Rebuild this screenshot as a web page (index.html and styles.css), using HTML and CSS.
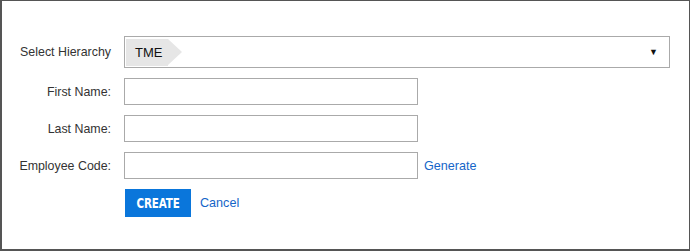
FILE: index.html
```html
<!DOCTYPE html>
<html>
<head>
<meta charset="utf-8">
<link rel="stylesheet" href="styles.css">
</head>
<body>
<div class="panel">
  <form class="form">
    <label class="label">Select Hierarchy</label>
    <div class="select">
      <span class="tag">TME</span>
      <span class="caret">&#9660;</span>
    </div>

    <label class="label">First Name:</label>
    <div class="field"><input class="input" type="text"></div>

    <label class="label">Last Name:</label>
    <div class="field"><input class="input" type="text"></div>

    <label class="label">Employee Code:</label>
    <div class="field"><input class="input" type="text"><a class="link" href="#">Generate</a></div>

    <span></span>
    <div class="actions">
      <button class="btn" type="button"><span class="btn-text">CREATE</span></button>
      <a class="link" href="#">Cancel</a>
    </div>
  </form>
</div>
</body>
</html>
```

FILE: styles.css
```css
html, body {
  margin: 0;
  padding: 0;
  background: #fff;
}
.panel {
  box-sizing: border-box;
  width: 690px;
  height: 251px;
  border: 1px solid #555;
  border-left-width: 2px;
  border-bottom-width: 2px;
  padding-top: 35px;
  font-family: "Liberation Sans", Arial, sans-serif;
  font-size: 12px;
  color: #333;
}
.form {
  display: grid;
  grid-template-columns: 109px 546px;
  column-gap: 13px;
  row-gap: 10px;
  align-items: center;
}
.label {
  text-align: right;
  color: #333;
  font-size: 12.4px;
}
.select {
  box-sizing: border-box;
  height: 32px;
  border: 1px solid #aaa;
  display: flex;
  align-items: center;
  justify-content: space-between;
  padding: 0 11px 0 1px;
}
.tag {
  position: relative;
  background: #e6e6e6;
  height: 27px;
  line-height: 27px;
  padding: 0 12px 0 9px;
  width: 21px;
  font-size: 13px;
  color: #111;
}
.tag::after {
  content: "";
  position: absolute;
  left: 100%;
  top: 0;
  border-top: 13.5px solid transparent;
  border-bottom: 13.5px solid transparent;
  border-left: 14px solid #e6e6e6;
}
.caret {
  font-size: 9px;
  color: #111;
}
.field {
  display: flex;
  align-items: center;
  gap: 6px;
}
.input {
  box-sizing: border-box;
  width: 294px;
  height: 27px;
  margin: 0;
  border: 1px solid #aaa;
  padding: 0 4px;
  font-family: inherit;
}
.link {
  color: #1565c8;
  text-decoration: none;
  font-size: 12.6px;
}
.actions {
  display: flex;
  align-items: center;
  gap: 9px;
}
.btn {
  box-sizing: border-box;
  width: 66px;
  height: 28px;
  margin: 0 0 0 1px;
  border: none;
  background: #0a76db;
  color: #fff;
  font-family: "DejaVu Sans", sans-serif;
  font-weight: bold;
  font-size: 14px;
  padding: 0;
  display: flex;
  align-items: center;
  justify-content: center;
}
.btn-text {
  display: inline-block;
  transform: scaleX(0.74);
  letter-spacing: -0.2px;
}
```
